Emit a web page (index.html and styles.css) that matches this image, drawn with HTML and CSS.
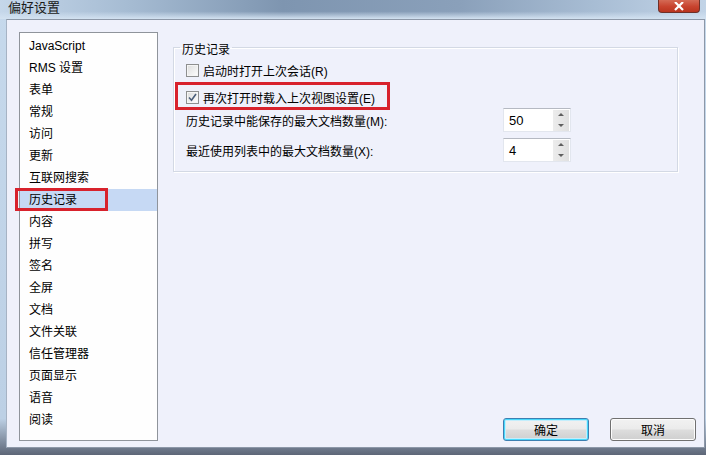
FILE: index.html
```html
<!DOCTYPE html>
<html lang="zh-CN">
<head>
  <meta charset="UTF-8" />
  <title>偏好设置</title>
  <link rel="stylesheet" href="styles.css">
</head>
<body>
  <div class="window">
    <div class="titlebar">
      <span class="title">偏好设置</span>
      <span class="close-btn">
        <svg width="12" height="9" viewBox="0 0 12 9"><path d="M2 0 L10 8 M10 0 L2 8" stroke="#fff" stroke-width="2.2"/></svg>
      </span>
    </div>

    <div class="frame">
      <div class="client">
        <ul class="category-list">
          <li>JavaScript</li>
          <li>RMS 设置</li>
          <li>表单</li>
          <li>常规</li>
          <li>访问</li>
          <li>更新</li>
          <li>互联网搜索</li>
          <li class="selected">历史记录<span class="mark mark-item"></span></li>
          <li>内容</li>
          <li>拼写</li>
          <li>签名</li>
          <li>全屏</li>
          <li>文档</li>
          <li>文件关联</li>
          <li>信任管理器</li>
          <li>页面显示</li>
          <li>语音</li>
          <li>阅读</li>
        </ul>

        <div class="pane">
          <fieldset class="group">
            <legend>历史记录</legend>

            <label class="check-row first">
              <span class="checkbox"></span>
              启动时打开上次会话(R)
            </label>

            <label class="check-row second">
              <span class="checkbox">
                <svg width="9" height="9" viewBox="0 0 9 9"><path d="M1 4.5 L3.5 7.2 L8 1" fill="none" stroke="#4a5d7a" stroke-width="1.6"/></svg>
              </span>
              再次打开时载入上次视图设置(E)
              <span class="mark mark-row"></span>
            </label>

            <div class="field-row third">
              <span class="field-label">历史记录中能保存的最大文档数量(M):</span>
              <span class="spinner">
                <span class="spinner-value">50</span>
                <span class="spin-btns">
                  <span class="spin up"></span>
                  <span class="spin down"></span>
                </span>
              </span>
            </div>

            <div class="field-row fourth">
              <span class="field-label">最近使用列表中的最大文档数量(X):</span>
              <span class="spinner">
                <span class="spinner-value">4</span>
                <span class="spin-btns">
                  <span class="spin up"></span>
                  <span class="spin down"></span>
                </span>
              </span>
            </div>
          </fieldset>

          <div class="actions">
            <button class="btn btn-default">确定</button>
            <button class="btn">取消</button>
          </div>
        </div>
      </div>
    </div>
  </div>
</body>
</html>
```

FILE: styles.css
```css
* {
  margin: 0;
  padding: 0;
  box-sizing: border-box;
}

body {
  width: 706px;
  height: 455px;
  overflow: hidden;
  font-family: 'Liberation Sans', 'Noto Sans CJK SC', sans-serif;
  font-size: 12px;
  color: #000;
}

.window {
  height: 455px;
  display: flex;
  flex-direction: column;
  background: linear-gradient(180deg, #c6d9ec 0%, #bcd0e5 92%, #5d6677 100%);
}

.titlebar {
  height: 19px;
  flex: none;
  display: flex;
  justify-content: space-between;
  align-items: flex-start;
  padding: 0 6px 0 8px;
  background:
    linear-gradient(180deg, rgba(255,255,255,0) 60%, #d3e2f1 100%),
    linear-gradient(90deg, #c5d7ea 0%, #a6bcd3 18%, #7e95b0 40%, #8aa0ba 65%, #a9bed5 85%, #c2d4e7 100%);
}

.title {
  font-size: 13px;
  line-height: 15px;
  color: #1a1a1a;
}

.close-btn {
  width: 42px;
  height: 13px;
  display: flex;
  align-items: center;
  justify-content: center;
  border: 1px solid #6e3028;
  border-top: none;
  border-radius: 0 0 4px 4px;
  background: linear-gradient(180deg, #d46a55 0%, #c8432e 55%, #b9351f 100%);
}

.frame {
  flex: 1;
  display: flex;
  padding: 0 1px 7px 6px;
}

.client {
  flex: 1;
  display: flex;
  gap: 15px;
  padding: 12px 0 6px 12px;
  background: #eff1fb;
  border: 1px solid #8d98a8;
  border-left-color: #a6b3c4;
}

/* left category list */
.category-list {
  list-style: none;
  width: 139px;
  flex: none;
  padding: 2px 0 0;
  background: #fefefe;
  border: 1px solid #8f949b;
}

.category-list li {
  position: relative;
  height: 22px;
  line-height: 22px;
  padding-left: 9px;
}

.category-list li.selected {
  background: #c6d9f4;
}

/* red annotation boxes */
.mark {
  position: absolute;
  border: 3px solid #d8222c;
  pointer-events: none;
}

.mark-item {
  left: -5px;
  top: -1px;
  width: 93px;
  height: 23px;
}

.mark-row {
  left: -11px;
  top: -5px;
  width: 215px;
  height: 28px;
}

/* right pane */
.pane {
  flex: 1;
  display: flex;
  flex-direction: column;
  padding-right: 8px;
}

.group {
  width: 505px;
  margin-top: 6px;
  padding: 0 0 9px 12px;
  border: 1px solid #d3d9e4;
  box-shadow: inset 1px 1px 0 #fff, 1px 1px 0 #fff;
}

.group legend {
  margin-left: -6px;
  padding: 6px 2px 0;
  line-height: 12px;
}

.check-row {
  position: relative;
  height: 20px;
  display: flex;
  align-items: center;
  gap: 4px;
}

.check-row.first {
  margin-top: 4px;
}

.check-row.second {
  margin-top: 7px;
  width: 200px;
}

.checkbox {
  width: 13px;
  height: 13px;
  flex: none;
  display: flex;
  align-items: center;
  justify-content: center;
  border: 1px solid #8e8f8f;
  background: linear-gradient(135deg, #dcdcdc 0%, #f4f4f4 70%, #fff 100%);
  box-shadow: inset 0 0 0 1px #f5f5f5;
}

.field-row {
  height: 24px;
  display: flex;
  align-items: center;
}

.field-row.third {
  margin-top: 1px;
}

.field-row.fourth {
  margin-top: 6px;
}

.field-label {
  width: 317px;
}

.spinner {
  width: 68px;
  height: 24px;
  display: flex;
  align-items: center;
  justify-content: space-between;
  padding: 0 1px 0 5px;
  background: #fff;
  border: 1px solid #e2e6ee;
  border-top-color: #b5b9c2;
}

.spinner-value {
  font-size: 13px;
}

.spin-btns {
  width: 16px;
  height: 21px;
  display: flex;
  flex-direction: column;
  background: linear-gradient(90deg, #ececec, #e0e0e0);
}

.spin {
  flex: 1;
  display: flex;
  align-items: center;
  justify-content: center;
}

.spin::before {
  content: '';
  border-left: 3px solid transparent;
  border-right: 3px solid transparent;
}

.spin.up::before {
  border-bottom: 3px solid #5f5f5f;
}

.spin.down::before {
  border-top: 3px solid #5f5f5f;
}

/* dialog buttons */
.actions {
  margin-top: auto;
  display: flex;
  justify-content: flex-end;
  gap: 21px;
}

.btn {
  width: 86px;
  height: 23px;
  font-family: inherit;
  font-size: 12px;
  color: #000;
  border: 1px solid #707070;
  border-radius: 3px;
  background: linear-gradient(180deg, #f2f2f2 0%, #ebebeb 48%, #dddddd 52%, #cfcfcf 100%);
  box-shadow: inset 0 0 0 1px #fcfcfc;
}

.btn-default {
  border-color: #3c7fb1;
  box-shadow: inset 0 0 0 1px #48d8fb, inset 0 0 0 2px #c4eefc;
}
```
